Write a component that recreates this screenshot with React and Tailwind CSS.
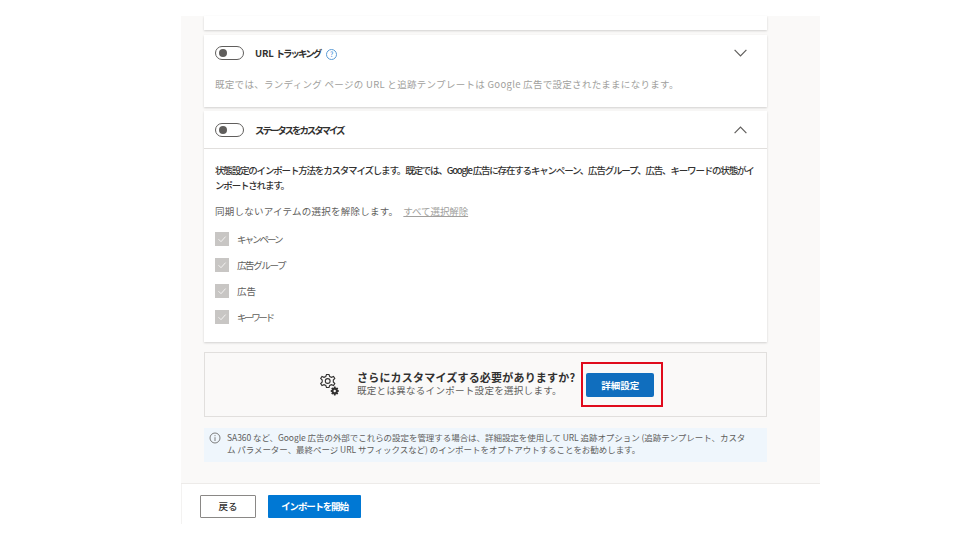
import React from "react";

function Toggle() {
  return (
    <div className="w-[29px] h-[14px] rounded-full border border-[#605e5c] flex items-center pl-[3px] shrink-0">
      <div className="w-[8px] h-[8px] rounded-full bg-[#605e5c]" />
    </div>
  );
}

function Chevron({ up }) {
  return (
    <svg width="13" height="8" viewBox="0 0 13 8" fill="none" stroke="#605e5c" strokeWidth="1.2" className="shrink-0">
      <path d={up ? "M.6 7.2 L6.5 1.2 L12.4 7.2" : "M.6 .8 L6.5 6.8 L12.4 .8"} />
    </svg>
  );
}

function Check({ label, className }) {
  return (
    <div className="flex items-center h-[14px] gap-[8px]">
      <div className="w-[14px] h-[14px] bg-[#c8c6c4] flex items-center justify-center shrink-0">
        <svg width="10" height="10" viewBox="0 0 10 10" fill="none" stroke="#f3f2f1" strokeWidth="1">
          <path d="M1.5 5.2 L4 7.7 L8.6 2.6" />
        </svg>
      </div>
      <span className={"text-[9.5px] leading-[14px] text-[#605e5c] whitespace-nowrap " + className}>{label}</span>
    </div>
  );
}

export default function App() {
  return (
    <div className="w-[960px] h-[540px] bg-white overflow-hidden pt-4 pl-[181px] font-['Noto_Sans_CJK_JP','Noto_Sans',sans-serif]">
      <div className="w-[639px] h-[468px] bg-[#faf9f8] border-b border-[#edebe9] pl-[23px] pr-[53px] flex flex-col">
        <div className="h-[14px] bg-white shadow-[0_1px_2px_rgba(0,0,0,0.16)] shrink-0" />

        <div className="mt-[5px] h-[72px] bg-white shadow-[0_1px_2px_rgba(0,0,0,0.16)] shrink-0 px-[11px] pt-[11px]">
          <div className="flex items-center h-[14px] pr-[9px]">
            <Toggle />
            <span className="ml-[11px] text-[9.5px] font-bold text-[#323130] leading-[14px] whitespace-nowrap">
              <span className="tracking-[-0.2px]">URL </span>
              <span className="tracking-[-2px]">トラッキング</span>
            </span>
            <span className="ml-[6px] mt-[2px] w-[11px] h-[11px] rounded-full border border-[#5b9bd5] text-[7px] leading-[9px] text-center text-[#2b88d8]">?</span>
            <div className="flex-1" />
            <Chevron />
          </div>
          <p className="mt-[17px] text-[9.5px] leading-[14px] text-[#a19f9d] tracking-[0.3px] whitespace-nowrap">
            既定では、ランディング ページの URL と追跡テンプレートは Google 広告で設定されたままになります。
          </p>
        </div>

        <div className="mt-[4px] h-[231px] bg-white shadow-[0_1px_2px_rgba(0,0,0,0.16)] shrink-0">
          <div className="h-[38px] border-b border-[#e1dfdd] pl-[11px] pr-[20px] flex items-center">
            <Toggle />
            <span className="ml-[11px] text-[9.5px] font-bold text-[#323130] tracking-[-2.1px] leading-[14px] whitespace-nowrap">ステータスをカスタマイズ</span>
            <div className="flex-1" />
            <Chevron up />
          </div>
          <div className="px-[11px] pt-[14px]">
            <p className="text-[9.5px] font-medium leading-[15px] text-[#323130] tracking-[-1.18px] whitespace-nowrap">
              状態設定のインポート方法をカスタマイズします。既定では、Google 広告に存在するキャンペーン、広告グループ、広告、キーワードの状態がイ
              <br />
              ンポートされます。
            </p>
            <p className="mt-[11px] text-[9.5px] leading-[14px] text-[#605e5c] tracking-[0.25px] whitespace-nowrap">
              同期しないアイテムの選択を解除します。
              <span className="ml-[5px] text-[#a19f9d] underline tracking-[-0.1px]">すべて選択解除</span>
            </p>
            <div className="mt-[14px] flex flex-col gap-[12px]">
              <Check label="キャンペーン" className="tracking-[-2px]" />
              <Check label="広告グループ" className="tracking-[-1.4px]" />
              <Check label="広告" className="tracking-[0px]" />
              <Check label="キーワード" className="tracking-[-2.4px]" />
            </div>
          </div>
        </div>

        <div className="mt-[10px] h-[65px] border border-[#e1dfdd] shrink-0 flex items-center pl-[115px]">
          <svg width="23" height="24" viewBox="0 0 22 24" fill="none" stroke="#323130" strokeWidth="1.1" className="shrink-0 -ml-[2px]">
            <path d="M8 1.5 L10.5 1.5 L11.2 3.5 L13 4.3 L15 3.5 L16.3 5.5 L14.8 7 L14.8 9 L16.3 10.5 L15 12.5 L13 11.7 L11.2 12.5 L10.5 14.5 L8 14.5 L7.3 12.5 L5.5 11.7 L3.5 12.5 L2.2 10.5 L3.7 9 L3.7 7 L2.2 5.5 L3.5 3.5 L5.5 4.3 L7.3 3.5 Z" />
            <circle cx="9.2" cy="8" r="2.4" />
            <path fill="#323130" stroke="none" d="M15.5 13.5 L17 13.5 L17.4 15 L18.8 14.4 L19.8 15.5 L18.9 16.7 L20.3 17.3 L20.3 18.7 L18.9 19.3 L19.8 20.5 L18.8 21.6 L17.4 21 L17 22.5 L15.5 22.5 L15.1 21 L13.7 21.6 L12.7 20.5 L13.6 19.3 L12.2 18.7 L12.2 17.3 L13.6 16.7 L12.7 15.5 L13.7 14.4 L15.1 15 Z" />
            <circle cx="16.2" cy="18" r="1.2" fill="#faf9f8" stroke="none" />
          </svg>
          <div className="ml-[16px] flex flex-col -mt-[2px]">
            <span className="text-[11px] leading-[13px] font-bold text-[#323130] tracking-[0.2px] whitespace-nowrap">さらにカスタマイズする必要がありますか?</span>
            <span className="text-[9.5px] leading-[13px] text-[#605e5c] tracking-[0.3px] whitespace-nowrap">既定とは異なるインポート設定を選択します。</span>
          </div>
          <div className="relative ml-[11px] mt-[1px]">
            <button className="block w-[68px] h-[24px] bg-[#106ebe] rounded-[2px] text-white text-[9.5px] font-bold tracking-[0px]">詳細設定</button>
            <div className="absolute left-[-5px] top-[-11px] w-[82px] h-[45px] border-2 border-[#e00b1c] pointer-events-none" />
          </div>
        </div>

        <div className="mt-[11px] h-[34px] bg-[#eff6fc] shrink-0 flex pl-[5px] pt-[3px]">
          <svg width="12" height="12" viewBox="0 0 12 12" fill="none" stroke="#605e5c" strokeWidth="0.8" className="shrink-0 mt-[1px]">
            <circle cx="6" cy="6" r="5" />
            <path d="M6 5.2 V9 M6 3.2 V4.2" />
          </svg>
          <p className="ml-[6px] text-[8.5px] leading-[12px] text-[#605e5c] tracking-[-0.05px] whitespace-nowrap">
            SA360 など、Google 広告の外部でこれらの設定を管理する場合は、詳細設定を使用して URL 追跡オプション (追跡テンプレート、カスタ
            <br />
            ム パラメーター、最終ページ URL サフィックスなど) のインポートをオプトアウトすることをお勧めします。
          </p>
        </div>
      </div>

      <div className="w-[639px] h-[40px] bg-white flex items-start pl-[18px] pt-[11px] gap-[12px] border-l border-[#f3f2f1]">
        <button className="w-[56px] h-[23px] bg-white border border-[#8a8886] rounded-[1px] text-[9.5px] text-[#323130] font-medium">戻る</button>
        <button className="w-[93px] h-[23px] bg-[#0078d4] rounded-[1px] text-[9.5px] text-white font-bold tracking-[-1.2px]">インポートを開始</button>
      </div>
    </div>
  );
}
